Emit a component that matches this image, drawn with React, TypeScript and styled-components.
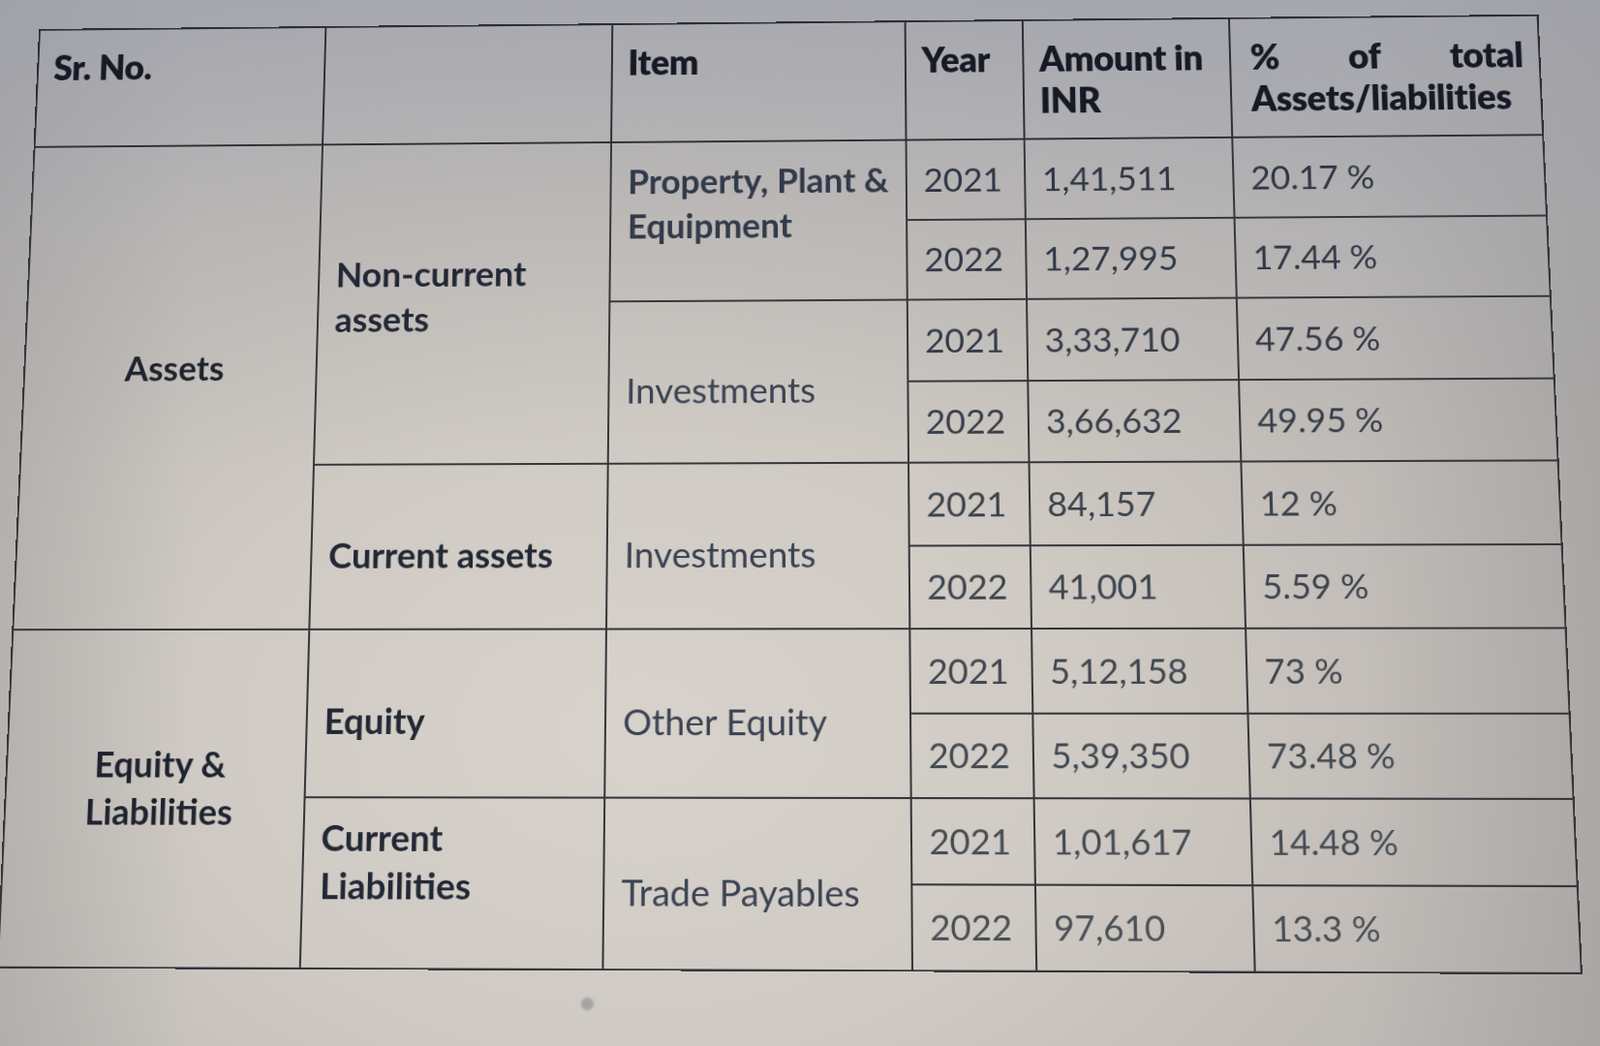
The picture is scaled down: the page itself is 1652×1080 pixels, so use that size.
import styled, { createGlobalStyle } from "styled-components";

const GlobalStyle = createGlobalStyle`
  html, body {
    margin: 0;
    padding: 0;
  }
  body {
    width: 1652px;
    height: 1080px;
    overflow: hidden;
    font-family: Lato, "Open Sans", "DejaVu Sans", sans-serif;
    background:
      linear-gradient(180deg, rgba(150, 156, 172, 0.45) 0%, rgba(160, 163, 174, 0.18) 22%, rgba(0, 0, 0, 0) 45%),
      linear-gradient(90deg, rgba(150, 148, 150, 0.35) 0%, rgba(0, 0, 0, 0) 12%, rgba(0, 0, 0, 0) 85%, rgba(150, 146, 144, 0.4) 100%),
      radial-gradient(ellipse 70% 75% at 40% 70%, #d7d2cb 0%, #cfcac3 40%, #c1bcb7 70%, #b3b1b1 100%);
  }
`;

const Page = styled.main`
  box-sizing: border-box;
  width: 1652px;
  height: 1080px;
  padding: 6px 0 0 10px;
  display: flex;
  flex-direction: column;
`;

// the screen was photographed from slightly below and to the right
const Tilt = styled.div`
  width: 1590px;
  transform: perspective(2000px) rotateX(6.5deg) rotateY(-1.6deg);
  transform-origin: 50% 50%;
`;

const Sheet = styled.table`
  width: 1590px;
  table-layout: fixed;
  border-collapse: collapse;
  border: 2.5px solid #2a2b30;
`;

const HeadRow = styled.tr`
  height: 129px;
`;

const BodyRow = styled.tr`
  height: 85.5px;
`;

const Head = styled.th<{ $inset?: number }>`
  box-sizing: border-box;
  text-align: left;
  vertical-align: top;
  padding: 18px 16px 0 ${(p) => p.$inset ?? 16}px;
  font-size: 37px;
  line-height: 45px;
  font-weight: 800;
  letter-spacing: -0.4px;
  color: #151a25;
  border: 2px solid #2d2e34;
`;

const JustifiedLine = styled.span`
  display: flex;
  justify-content: space-between;
`;

type Kind = "group" | "label" | "item" | "strong" | "value";

const kindStyle: Record<Kind, string> = {
  group: "font-weight: 700; font-size: 36px; color: #1e232e; text-align: center;",
  label: "font-weight: 700; font-size: 36.5px; color: #222835;",
  strong: "font-weight: 700; font-size: 36px; color: #323a4a;",
  item: "font-weight: 400; font-size: 37px; color: #3b4353;",
  value: "font-weight: 400; font-size: 35.5px;",
};

const Cell = styled.td<{ $kind: Kind; $fade?: number; $lift?: number; $drop?: number }>`
  box-sizing: border-box;
  vertical-align: middle;
  text-align: left;
  padding: ${(p) => p.$drop ?? 0}px 8px ${(p) => p.$lift ?? 0}px 17px;
  line-height: 48px;
  white-space: nowrap;
  border: 2px solid #34363c;
  ${(p) => kindStyle[p.$kind]}
  ${(p) =>
    p.$kind === "value"
      ? `color: rgb(${46 + (p.$fade ?? 0) * 3}, ${53 + (p.$fade ?? 0) * 3}, ${68 + (p.$fade ?? 0) * 2});`
      : ""}
`;

const Dot = styled.span`
  width: 13px;
  height: 13px;
  margin: 38px 0 0 590px;
  border-radius: 50%;
  background: #a6a3a2;
  filter: blur(1px);
`;

const widths = [309, 307, 311, 124, 217, 322];

type Line = { year: string; amount: string; share: string };

const lines: Line[] = [
  { year: "2021", amount: "1,41,511", share: "20.17 %" },
  { year: "2022", amount: "1,27,995", share: "17.44 %" },
  { year: "2021", amount: "3,33,710", share: "47.56 %" },
  { year: "2022", amount: "3,66,632", share: "49.95 %" },
  { year: "2021", amount: "84,157", share: "12 %" },
  { year: "2022", amount: "41,001", share: "5.59 %" },
  { year: "2021", amount: "5,12,158", share: "73 %" },
  { year: "2022", amount: "5,39,350", share: "73.48 %" },
  { year: "2021", amount: "1,01,617", share: "14.48 %" },
  { year: "2022", amount: "97,610", share: "13.3 %" },
];

const Values = ({ line, index }: { line: Line; index: number }) => (
  <>
    <Cell $kind="value" $fade={index}>{line.year}</Cell>
    <Cell $kind="value" $fade={index}>{line.amount}</Cell>
    <Cell $kind="value" $fade={index}>{line.share}</Cell>
  </>
);

const App = () => {
  return (
    <>
      <GlobalStyle />
      <Page>
        <Tilt>
          <Sheet>
            <colgroup>
              {widths.map((w, i) => (
                <col key={i} style={{ width: w }} />
              ))}
            </colgroup>
            <thead>
              <HeadRow>
                <Head>Sr. No.</Head>
                <Head />
                <Head>Item</Head>
                <Head>Year</Head>
                <Head>
                  Amount in
                  <br />
                  INR
                </Head>
                <Head $inset={20}>
                  <JustifiedLine>
                    <span>%</span>
                    <span>of</span>
                    <span>total</span>
                  </JustifiedLine>
                  Assets/liabilities
                </Head>
              </HeadRow>
            </thead>
            <tbody>
              <BodyRow>
                <Cell $kind="group" rowSpan={6} $lift={36}>Assets</Cell>
                <Cell $kind="label" rowSpan={4} $lift={14}>
                  Non-current
                  <br />
                  assets
                </Cell>
                <Cell $kind="strong" rowSpan={2} $lift={40}>
                  Property, Plant &amp;
                  <br />
                  Equipment
                </Cell>
                <Values line={lines[0]} index={0} />
              </BodyRow>
              <BodyRow>
                <Values line={lines[1]} index={1} />
              </BodyRow>
              <BodyRow>
                <Cell $kind="item" rowSpan={2} $drop={16}>Investments</Cell>
                <Values line={lines[2]} index={2} />
              </BodyRow>
              <BodyRow>
                <Values line={lines[3]} index={3} />
              </BodyRow>
              <BodyRow>
                <Cell $kind="label" rowSpan={2} $drop={16}>Current assets</Cell>
                <Cell $kind="item" rowSpan={2} $drop={16}>Investments</Cell>
                <Values line={lines[4]} index={4} />
              </BodyRow>
              <BodyRow>
                <Values line={lines[5]} index={5} />
              </BodyRow>
              <BodyRow>
                <Cell $kind="group" rowSpan={4} $lift={20}>
                  Equity &amp;
                  <br />
                  Liabilities
                </Cell>
                <Cell $kind="label" rowSpan={2} $drop={14}>Equity</Cell>
                <Cell $kind="item" rowSpan={2} $drop={16}>Other Equity</Cell>
                <Values line={lines[6]} index={6} />
              </BodyRow>
              <BodyRow>
                <Values line={lines[7]} index={7} />
              </BodyRow>
              <BodyRow>
                <Cell $kind="label" rowSpan={2} $lift={44}>
                  Current
                  <br />
                  Liabilities
                </Cell>
                <Cell $kind="item" rowSpan={2} $drop={16}>Trade Payables</Cell>
                <Values line={lines[8]} index={8} />
              </BodyRow>
              <BodyRow>
                <Values line={lines[9]} index={9} />
              </BodyRow>
            </tbody>
          </Sheet>
        </Tilt>
        <Dot />
      </Page>
    </>
  );
};

export default App;
